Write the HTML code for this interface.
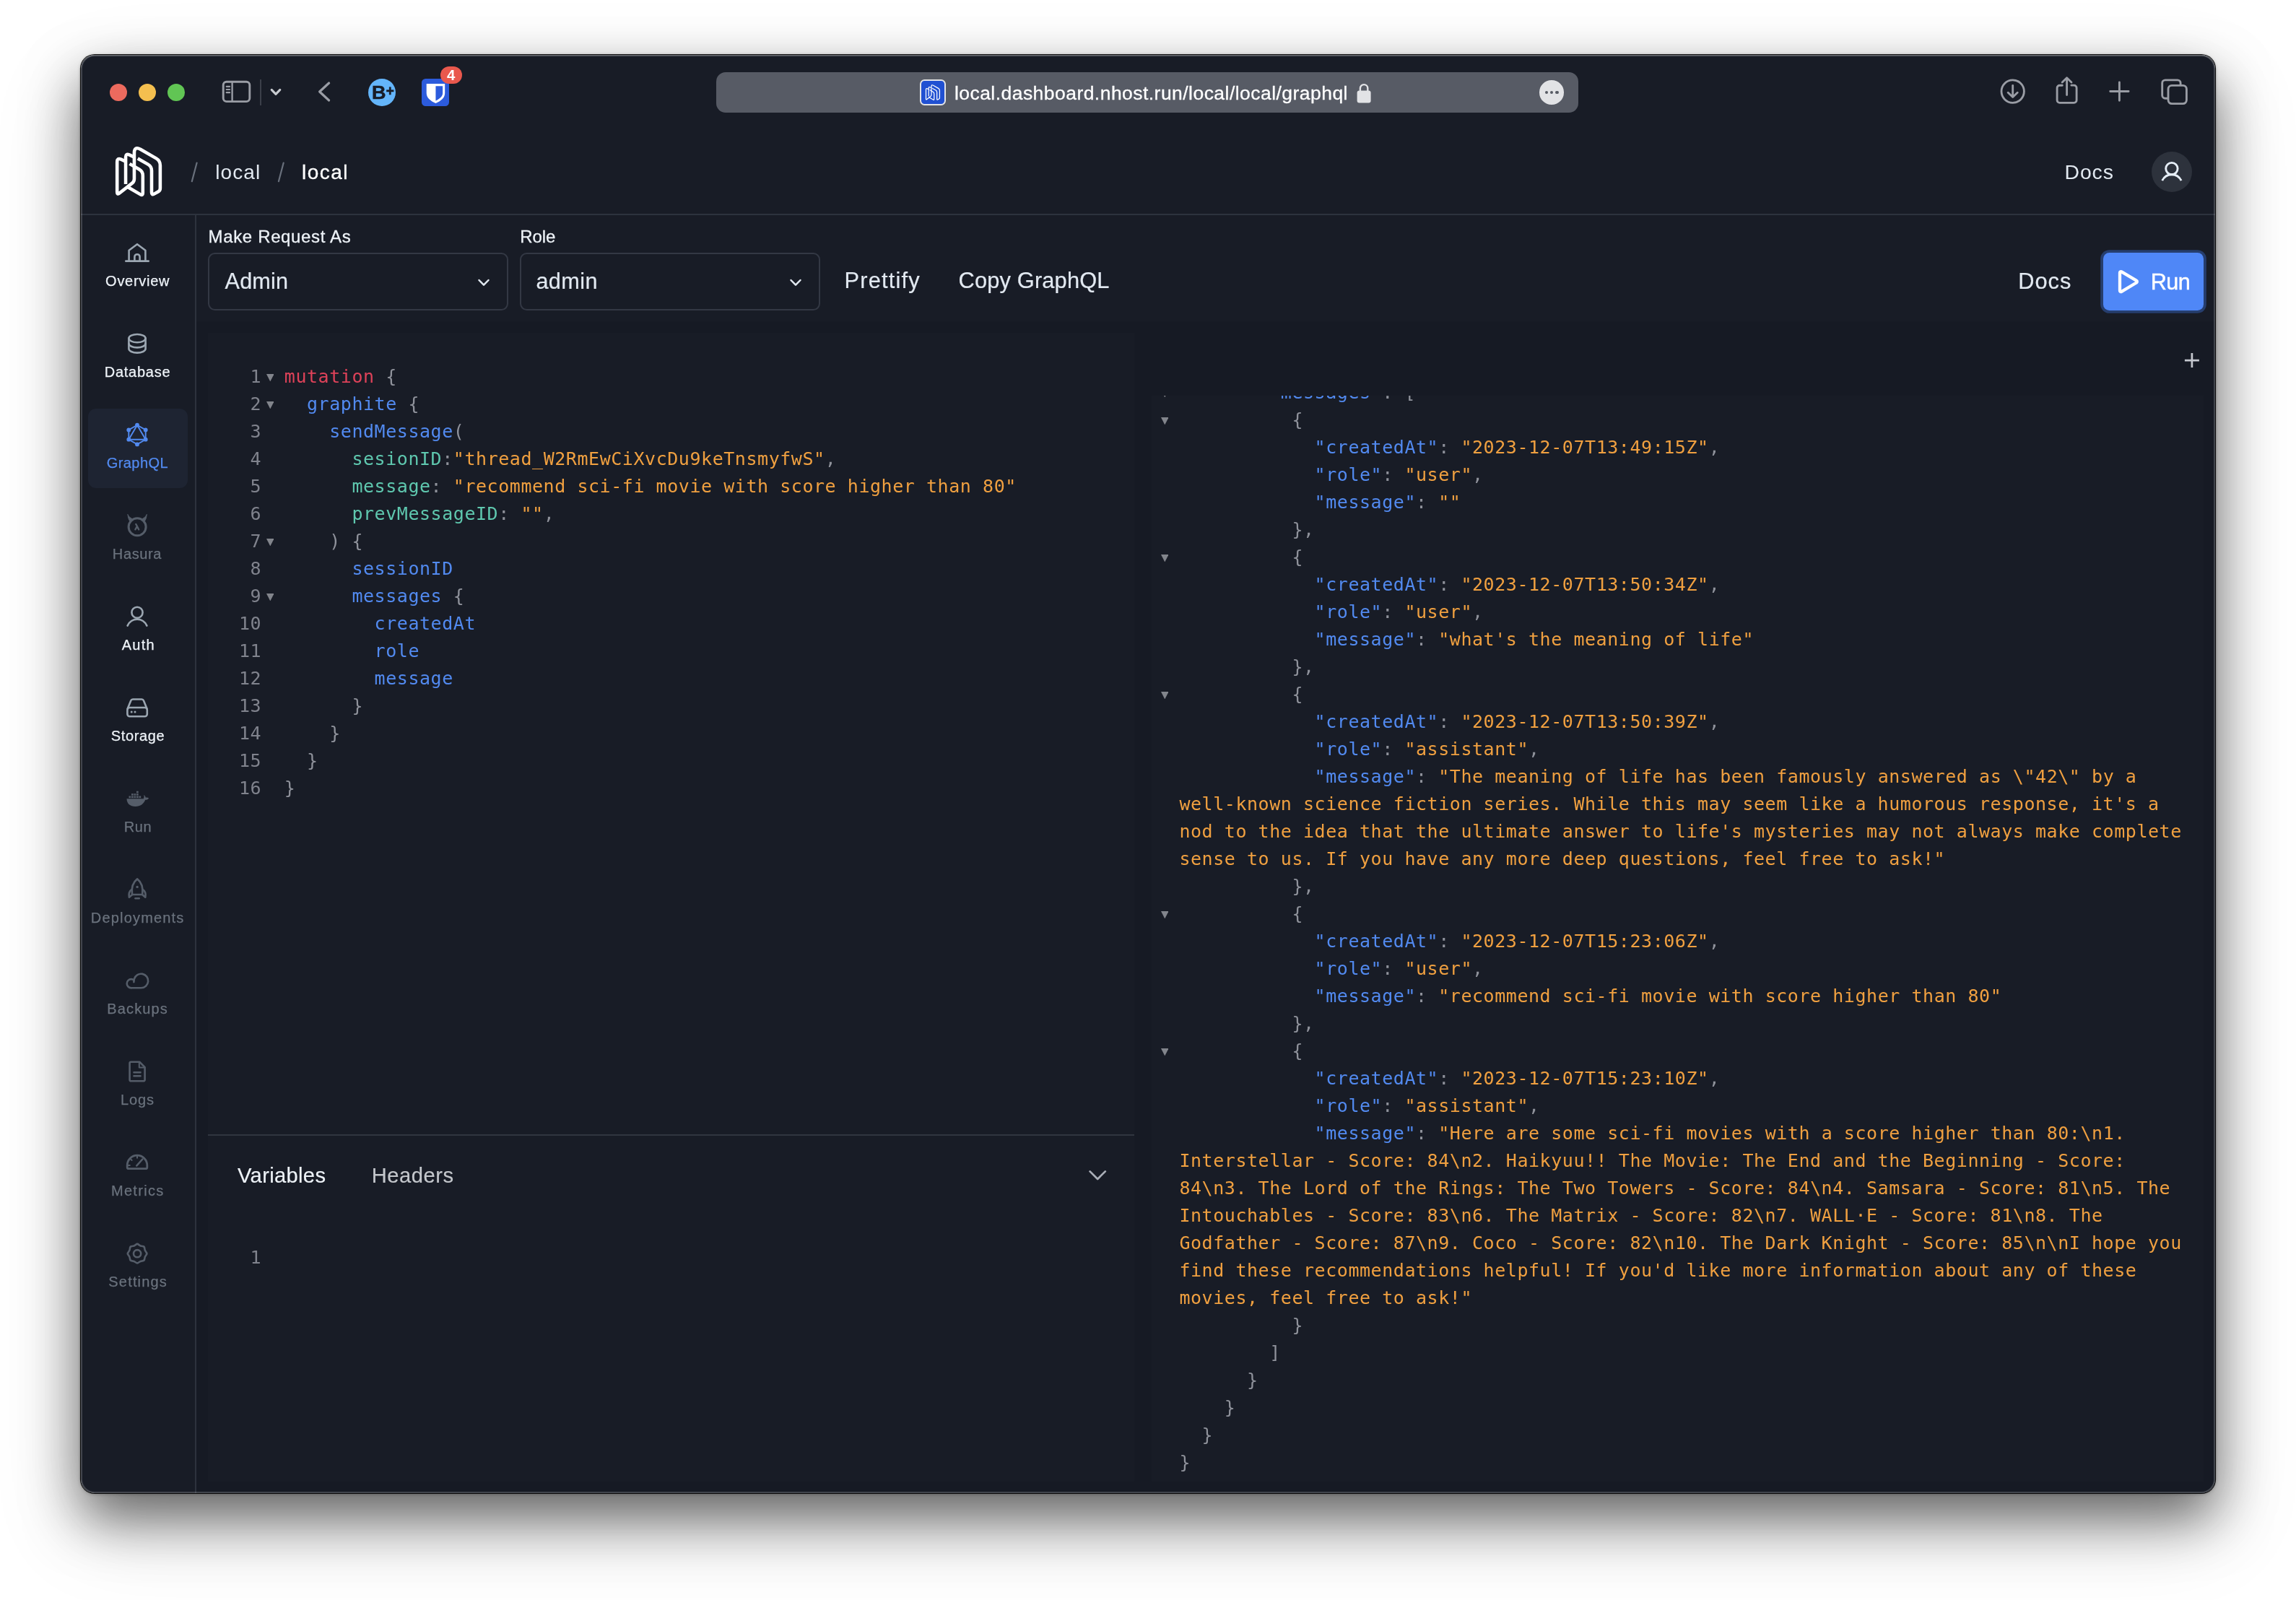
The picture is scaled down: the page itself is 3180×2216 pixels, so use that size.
<!DOCTYPE html>
<html lang="en"><head><meta charset="utf-8"><title>GraphQL - local - nhost dashboard</title>
<style>
html,body{margin:0;padding:0;background:#fff;}
body{width:3180px;height:2216px;position:relative;overflow:hidden;font-family:"Liberation Sans", sans-serif;}
.b{position:absolute;box-sizing:border-box;display:block;}
.t{position:absolute;white-space:pre;line-height:1;font-family:"Liberation Sans", sans-serif;}
#win{position:absolute;left:112px;top:76px;width:2956px;height:1992px;border-radius:19px;background:#181c26;overflow:hidden;}
#shadow{position:absolute;left:112px;top:76px;width:2956px;height:1992px;border-radius:19px;
 box-shadow:0 0 0 1.1px rgba(0,0,0,.92), 0 1px 5px rgba(0,0,0,.3), 0 35px 74px rgba(0,0,0,.55), 0 46px 126px rgba(0,0,0,.15);}
#hl{position:absolute;left:112px;top:76px;width:2956px;height:1992px;border-radius:19px;box-shadow:inset 0 0 0 2px rgba(255,255,255,.19), inset 0 1.5px 0 0 rgba(255,255,255,.16);pointer-events:none;}
#in{position:absolute;left:-112px;top:-76px;width:3180px;height:2216px;will-change:transform;}
.code{position:absolute;font-family:"DejaVu Sans Mono", "Liberation Mono", monospace;font-size:25px;letter-spacing:0.549px;line-height:38px;white-space:pre;color:#8f929b;}
.code div{height:38px;}
.k{color:#de4259}.f{color:#528af0}.a{color:#5fc8af}.s{color:#f0a040}.p{color:#8f929b}
.ln{position:absolute;font-family:"DejaVu Sans Mono", "Liberation Mono", monospace;font-size:25px;letter-spacing:0.549px;line-height:38px;white-space:pre;color:#80838d;text-align:right;}
.ln div{height:38px;}
</style></head><body>
<div id="shadow"></div>
<div id="win"><div id="in">
<div class="b" style="left:151.8px;top:115.5px;width:24.4px;height:24.4px;background:#ec6a5e;border-radius:12.2px;"></div>
<div class="b" style="left:191.60000000000002px;top:115.5px;width:24.4px;height:24.4px;background:#f4bf4f;border-radius:12.2px;"></div>
<div class="b" style="left:231.8px;top:115.5px;width:24.4px;height:24.4px;background:#61c554;border-radius:12.2px;"></div>
<svg class="b" style="left:305px;top:108px;" width="46" height="38" viewBox="305 108 46 38" fill="none"><rect x="309.200" y="113.200" width="36.600" height="27.400" rx="4.600" stroke="#9a9da5" stroke-width="2.900"/><path d="M321.6 113V140.6" stroke="#9a9da5" stroke-width="2.4"/><path d="M313.700 119.800h4.400M313.700 124h4.400M313.700 128.200h4.400" stroke="#9a9da5" stroke-width="2.200" stroke-linecap="round"/></svg>
<div class="b" style="left:360px;top:109.5px;width:1.6px;height:36.5px;background:#3b3f49;"></div>
<svg class="b" style="left:370px;top:118px;" width="24" height="20" viewBox="370 118 24 20" fill="none"><path d="M376.2 124.3l5.8 6 5.8-6" stroke="#c8cbd0" stroke-width="3.1" stroke-linecap="round" stroke-linejoin="round"/></svg>
<svg class="b" style="left:434px;top:108px;" width="30" height="38" viewBox="434 108 30 38" fill="none"><path d="M455.6 115l-13 12 13 12" stroke="#9a9da5" stroke-width="3.2" stroke-linecap="round" stroke-linejoin="round"/></svg>
<div class="b" style="left:509.5px;top:108.7px;width:38px;height:38px;background:#64b5fa;border-radius:19px;"></div>
<div class="t" style="left:515.40px;top:115.54px;font-size:25px;color:#181c26;-webkit-text-stroke:0.5px #181c26;font-weight:700;transform:scaleX(1.08);transform-origin:0 0;">B</div>
<div class="t" style="left:534.60px;top:116.89px;font-size:19.5px;color:#181c26;-webkit-text-stroke:0.5px #181c26;font-weight:700;">+</div>
<div class="b" style="left:584px;top:108.6px;width:38.2px;height:38.2px;background:#2c5bdc;border-radius:5.5px;"></div>
<svg class="b" style="left:584px;top:108.6px;" width="38.2" height="38.2" viewBox="0 0 38.2 38.2" fill="none"><path d="M6.700 7h25.500v13c0 6.400-5.500 10.800-12.750 14.100C12.200 30.800 6.700 26.400 6.700 20z" fill="#fff"/><path d="M19.450 10.200h9.700v9.800c0 4.300-3.800 7.600-9.700 10.500z" fill="#2c5bdc"/></svg>
<div class="b" style="left:609.7px;top:92.1px;width:30.2px;height:24.2px;background:#e9584d;border-radius:12.1px;"></div>
<div class="t" style="left:618.90px;top:94.13px;font-size:20.4px;color:#ffffff;font-weight:700;">4</div>
<div class="b" style="left:992px;top:99.6px;width:1194px;height:56px;background:#575b65;border-radius:13px;"></div>
<div class="b" style="left:1273.6px;top:109.7px;width:36.4px;height:36.4px;background:#2050d2;border-radius:6.5px;border:2px solid #e2e3e6;"></div>
<svg class="b" style="left:1279.5px;top:115.6px;" width="24.6" height="24.6" viewBox="250 150 1200 1240" fill="none"><g stroke="#fff" stroke-width="62" stroke-linecap="round" stroke-linejoin="round"><path d="M818 475L1040 602Q1120 648 1120 740L1120 1225Q1120 1290 1175 1258L1265 1207Q1310 1182 1310 1130L1310 625Q1310 520 1222 470L862 262Q735 190 735 340L735 925Q735 985 690 1018L402 1243Q355 1280 355 1220L355 550Q355 455 440 490L505 520"/><path d="M545 1010L545 440Q545 355 625 390L700 425"/><path d="M640 595L850 716Q925 760 925 850L925 1240Q925 1300 873 1270L612 1116"/></g></svg>
<div class="t" style="left:1321.90px;top:115.57px;font-size:26.5px;color:#ffffff;letter-spacing:0.458px;-webkit-text-stroke:0.3px #ffffff;">local.dashboard.nhost.run/local/local/graphql</div>
<svg class="b" style="left:1878px;top:114px;" width="24" height="30" viewBox="1878 114 24 30" fill="none"><rect x="1879.6" y="125.6" width="19" height="16.9" rx="3" fill="#e2e3e6"/><path d="M1883.9 126.500v-4.2a5.2 5.200 0 0 1 10.4 0v4.2" stroke="#e2e3e6" stroke-width="2.4"/></svg>
<div class="b" style="left:2132.4px;top:111.1px;width:33.6px;height:33.6px;background:#e2e3e6;border-radius:16.8px;"></div>
<div class="b" style="left:2139.4999999999995px;top:125.60000000000001px;width:4.6px;height:4.6px;background:#565a64;border-radius:2.3px;"></div>
<div class="b" style="left:2146.8999999999996px;top:125.60000000000001px;width:4.6px;height:4.6px;background:#565a64;border-radius:2.3px;"></div>
<div class="b" style="left:2154.2999999999997px;top:125.60000000000001px;width:4.6px;height:4.6px;background:#565a64;border-radius:2.3px;"></div>
<svg class="b" style="left:2766px;top:104px;" width="44" height="44" viewBox="2766 104 44 44" fill="none"><circle cx="2787.7" cy="126.6" r="15.7" stroke="#9a9da5" stroke-width="2.85"/><path d="M2787.7 118.300v15.8M2781.2 128.200l6.5 6.3 6.5-6.3" stroke="#9a9da5" stroke-width="2.85" stroke-linecap="round" stroke-linejoin="round"/></svg>
<svg class="b" style="left:2840px;top:102px;" width="46" height="46" viewBox="2840 102 46 46" fill="none"><path d="M2856.3 118.200h-3.6a3.600 3.600 0 0 0-3.600 3.600v17a3.600 3.600 0 0 0 3.600 3.600h19.8a3.600 3.600 0 0 0 3.600-3.600v-17a3.600 3.600 0 0 0-3.600-3.600h-3.600" stroke="#9a9da5" stroke-width="2.85" stroke-linecap="round"/><path d="M2862.6 131.500v-23.400M2856.2 113.900l6.400-6.200 6.400 6.200" stroke="#9a9da5" stroke-width="2.85" stroke-linecap="round" stroke-linejoin="round"/></svg>
<svg class="b" style="left:2918px;top:110px;" width="34" height="34" viewBox="2918 110 34 34" fill="none"><path d="M2922.700 126.500h25.400M2935.400 113.800v25.400" stroke="#9a9da5" stroke-width="2.85" stroke-linecap="round"/></svg>
<svg class="b" style="left:2990px;top:106px;" width="44" height="42" viewBox="2990 106 44 42" fill="none"><path d="M3001.500 136.200h-2.600a4.200 4.200 0 0 1-4.200-4.200v-17a4.200 4.200 0 0 1 4.200-4.200h17a4.200 4.200 0 0 1 4.200 4.200v1.800" stroke="#9a9da5" stroke-width="2.85" stroke-linecap="round"/><rect x="3003" y="118.400" width="25.4" height="25.200" rx="5" stroke="#9a9da5" stroke-width="2.85"/></svg>
<svg class="b" style="left:140px;top:190px;" width="120" height="100" viewBox="0 0 1920 1600" fill="none"><g stroke="#fff" stroke-width="73" stroke-linejoin="round" stroke-linecap="butt"><path d="M812 472L1040 602Q1120 648 1120 740L1120 1225Q1120 1290 1175 1258L1265 1207Q1310 1182 1310 1130L1310 625Q1310 520 1222 470L872 268Q735 196 735 345L735 925Q735 985 690 1018L402 1243Q355 1280 355 1220L355 550Q355 455 440 490L545 538"/><path d="M545 1040L545 440Q545 355 625 390L735 441"/><path d="M632 590L850 716Q925 760 925 850L925 1240Q925 1300 873 1270L590 1104"/></g></svg>
<svg class="b" style="left:260px;top:220px;" width="20" height="36" viewBox="260 220 20 36" fill="none"><path d="M272.6 225.500L265.800 251.200" stroke="#69707c" stroke-width="2.2" stroke-linecap="round"/></svg>
<div class="t" style="left:298.20px;top:224.50px;font-size:28px;color:#e2e9f1;letter-spacing:1.084px;">local</div>
<svg class="b" style="left:380px;top:220px;" width="20" height="36" viewBox="380 220 20 36" fill="none"><path d="M392.7 225.500L385.900 251.200" stroke="#69707c" stroke-width="2.2" stroke-linecap="round"/></svg>
<div class="t" style="left:418.00px;top:224.50px;font-size:28px;color:#ffffff;letter-spacing:1.459px;-webkit-text-stroke:0.35px #ffffff;">local</div>
<div class="t" style="left:2859.50px;top:223.86px;font-size:28.4px;color:#e2e9f1;letter-spacing:0.904px;">Docs</div>
<div class="b" style="left:2979.6px;top:209.8px;width:56.2px;height:56.2px;background:#2d323c;border-radius:28.1px;"></div>
<svg class="b" style="left:2990px;top:220px;" width="36" height="36" viewBox="2990 220 36 36" fill="none"><circle cx="3007.900" cy="233.600" r="8.200" stroke="#e6eef7" stroke-width="2.900"/><path d="M2994.700 250.200c2.700-5.400 7.500-8.400 13.200-8.400s10.500 3 13.200 8.400" stroke="#e6eef7" stroke-width="2.900"/></svg>
<div class="b" style="left:111px;top:296px;width:2958px;height:2px;background:#2d323d;"></div>
<div class="b" style="left:270px;top:297px;width:2px;height:1780px;background:#2d323d;"></div>
<div class="b" style="left:122px;top:566px;width:138px;height:110px;background:#1e2432;border-radius:11px;"></div>
<div class="t" style="left:146.10px;top:378.82px;font-size:20px;color:#eef3f8;letter-spacing:0.728px;-webkit-text-stroke:0.25px #eef3f8;">Overview</div>
<div class="t" style="left:144.72px;top:504.82px;font-size:20px;color:#eef3f8;letter-spacing:0.751px;-webkit-text-stroke:0.25px #eef3f8;">Database</div>
<div class="t" style="left:147.72px;top:630.82px;font-size:20px;color:#528af0;letter-spacing:0.435px;-webkit-text-stroke:0.25px #528af0;">GraphQL</div>
<div class="t" style="left:155.85px;top:756.82px;font-size:20px;color:#6a727d;letter-spacing:0.630px;-webkit-text-stroke:0.25px #6a727d;">Hasura</div>
<div class="t" style="left:168.72px;top:882.82px;font-size:20px;color:#eef3f8;letter-spacing:1.243px;-webkit-text-stroke:0.25px #eef3f8;">Auth</div>
<div class="t" style="left:153.72px;top:1008.82px;font-size:20px;color:#eef3f8;letter-spacing:0.637px;-webkit-text-stroke:0.25px #eef3f8;">Storage</div>
<div class="t" style="left:171.72px;top:1134.82px;font-size:20px;color:#6a727d;letter-spacing:0.592px;-webkit-text-stroke:0.25px #6a727d;">Run</div>
<div class="t" style="left:125.85px;top:1260.82px;font-size:20px;color:#6a727d;letter-spacing:1.178px;-webkit-text-stroke:0.25px #6a727d;">Deployments</div>
<div class="t" style="left:148.35px;top:1386.82px;font-size:20px;color:#6a727d;letter-spacing:1.132px;-webkit-text-stroke:0.25px #6a727d;">Backups</div>
<div class="t" style="left:167.10px;top:1512.82px;font-size:20px;color:#6a727d;letter-spacing:0.877px;-webkit-text-stroke:0.25px #6a727d;">Logs</div>
<div class="t" style="left:153.97px;top:1638.82px;font-size:20px;color:#6a727d;letter-spacing:1.301px;-webkit-text-stroke:0.25px #6a727d;">Metrics</div>
<div class="t" style="left:150.35px;top:1764.82px;font-size:20px;color:#6a727d;letter-spacing:1.176px;-webkit-text-stroke:0.25px #6a727d;">Settings</div>
<svg class="b" style="left:169.9px;top:329.75px;color:#9ba6b1" width="40" height="40" viewBox="0 0 40 40" fill="none" stroke="currentColor" stroke-width="2.6" stroke-linecap="round" stroke-linejoin="round"><path d="M8.600 31.200V16.800L20 8.200l11.400 8.600v14.400"/><path d="M4.400 31.700h31.200" stroke-width="2.8"/><path d="M16.400 31.200v-5.400a3.600 3.600 0 0 1 7.200 0v5.400"/></svg>
<svg class="b" style="left:169.9px;top:455.75px;color:#9ba6b1" width="40" height="40" viewBox="0 0 40 40" fill="none" stroke="currentColor" stroke-width="2.6" stroke-linecap="round" stroke-linejoin="round"><ellipse cx="20" cy="12.600" rx="11.600" ry="5.600"/><path d="M8.400 12.600v14.400c0 3.100 5.200 5.600 11.600 5.600s11.600-2.500 11.600-5.600V12.600"/><path d="M8.400 19.800c0 3.100 5.200 5.600 11.600 5.600s11.600-2.500 11.600-5.600"/></svg>
<svg class="b" style="left:169.9px;top:581.75px;color:#528af0" width="40" height="40" viewBox="0 0 40 40" fill="none" stroke="currentColor" stroke-width="2.6" stroke-linecap="round" stroke-linejoin="round"><g stroke-width="1.9"><path d="M20 6.700L31.700 13.400V26.700L20 33.400 8.300 26.700V13.400z"/><path d="M20 6.700L31.700 26.700H8.300z"/></g><g fill="currentColor" stroke="none"><circle cx="20" cy="6.7" r="2.9"/><circle cx="31.7" cy="13.4" r="2.9"/><circle cx="31.7" cy="26.7" r="2.9"/><circle cx="20" cy="33.4" r="2.9"/><circle cx="8.3" cy="26.7" r="2.9"/><circle cx="8.3" cy="13.4" r="2.9"/></g></svg>
<svg class="b" style="left:169.9px;top:707.75px;color:#555d69" width="40" height="40" viewBox="0 0 40 40" fill="none" stroke="currentColor" stroke-width="2.6" stroke-linecap="round" stroke-linejoin="round"><circle cx="20.100" cy="21.800" r="12" stroke-width="3"/><path d="M7 4.800C7.400 9.600 8.800 13 10.900 15l3.900-3.900C11.300 10.300 8.600 8 7 4.800zM33.200 4.800C32.800 9.600 31.400 13 29.300 15l-3.900-3.900C28.900 10.300 31.600 8 33.200 4.800z" fill="currentColor" stroke-width="1" /><path d="M18.200 17.900l1.700 2.900 2.300 4.600M19.900 20.800l-2.500 4.600" stroke-width="2.300"/></svg>
<svg class="b" style="left:169.9px;top:833.75px;color:#9ba6b1" width="40" height="40" viewBox="0 0 40 40" fill="none" stroke="currentColor" stroke-width="2.6" stroke-linecap="round" stroke-linejoin="round"><circle cx="20" cy="14.300" r="7.600"/><path d="M6.600 32.600C9.400 26.700 14.400 23.800 20 23.800s10.600 2.900 13.400 8.800"/></svg>
<svg class="b" style="left:169.9px;top:959.75px;color:#9ba6b1" width="40" height="40" viewBox="0 0 40 40" fill="none" stroke="currentColor" stroke-width="2.6" stroke-linecap="round" stroke-linejoin="round"><rect x="6.400" y="20" width="27.400" height="12.200" rx="3.200"/><path d="M6.700 21.600L11.200 10.400c.5-1.200 1.500-1.900 2.800-1.900h12.200c1.300 0 2.300.7 2.800 1.900l4.500 11.200"/><circle cx="12.200" cy="26.100" r="1.500" fill="currentColor" stroke="none"/><circle cx="17" cy="26.100" r="1.500" fill="currentColor" stroke="none"/></svg>
<svg class="b" style="left:169.9px;top:1085.75px;color:#555d69" width="40" height="40" viewBox="0 0 40 40" fill="none" stroke="currentColor" stroke-width="2.6" stroke-linecap="round" stroke-linejoin="round"><g fill="currentColor" stroke="none" transform="translate(0.300 1.900) "><path d="M5.200 18.400h23.300c.6-1.700 1.200-3.300.3-5.200 1.700 1 2.500 2.300 2.700 3.700 1.500-.4 3-.3 4.300.6-1 1.700-2.700 2.400-4.900 2.300C28.800 25.400 24.300 29 17.200 29 9.800 29 5.400 25.300 5.200 18.400z"/><rect x="8.2" y="14.6" width="2.700" height="2.600"/><rect x="11.7" y="14.6" width="2.700" height="2.600"/><rect x="15.2" y="14.6" width="2.700" height="2.600"/><rect x="18.7" y="14.6" width="2.700" height="2.600"/><rect x="22.2" y="14.6" width="2.700" height="2.600"/><rect x="11.7" y="11.2" width="2.700" height="2.600"/><rect x="15.2" y="11.2" width="2.700" height="2.600"/><rect x="18.7" y="11.2" width="2.700" height="2.600"/><rect x="18.7" y="7.8" width="2.700" height="2.600"/></g></svg>
<svg class="b" style="left:169.9px;top:1211.75px;color:#555d69" width="40" height="40" viewBox="0 0 40 40" fill="none" stroke="currentColor" stroke-width="2.6" stroke-linecap="round" stroke-linejoin="round"><path d="M20.100 5.400C14.300 9.800 11.800 17.300 13 27h14.200C28.400 17.300 25.900 9.800 20.100 5.400z"/><path d="M12.700 19.800c-3.300 2-4.700 5.900-3.800 10.900l4.600-3.900M27.500 19.800c3.300 2 4.700 5.900 3.800 10.900l-4.600-3.900"/><path d="M17.400 32.200h5.400" stroke-width="2.400"/><circle cx="20.100" cy="16.400" r="1.700" fill="currentColor" stroke="none"/></svg>
<svg class="b" style="left:169.9px;top:1337.75px;color:#555d69" width="40" height="40" viewBox="0 0 40 40" fill="none" stroke="currentColor" stroke-width="2.6" stroke-linecap="round" stroke-linejoin="round"><path d="M11.800 30.300h13.600a9.800 9.800 0 1 0-9.400-12.600c-.5 1.500-.7 3-.6 4.500"/><path d="M11.800 30.300a6.100 6.100 0 0 1 0-12.200c1.500 0 2.800.5 3.900 1.300"/></svg>
<svg class="b" style="left:169.9px;top:1463.75px;color:#555d69" width="40" height="40" viewBox="0 0 40 40" fill="none" stroke="currentColor" stroke-width="2.6" stroke-linecap="round" stroke-linejoin="round"><path d="M11.400 6.700h11.800l7.400 7.400v17.400a1.800 1.800 0 0 1-1.800 1.800H11.400a1.800 1.800 0 0 1-1.800-1.800V8.500a1.800 1.800 0 0 1 1.800-1.800z"/><path d="M22.800 7v7.400h7.400" stroke-width="2"/><path d="M15.400 21.200h9.200M15.400 26.200h9.200" stroke-width="2.400"/></svg>
<svg class="b" style="left:169.9px;top:1589.75px;color:#555d69" width="40" height="40" viewBox="0 0 40 40" fill="none" stroke="currentColor" stroke-width="2.6" stroke-linecap="round" stroke-linejoin="round"><path d="M8.200 28.700h23.600a2 2 0 0 0 2-2V24a13.800 13.800 0 0 0-27.600 0v2.700a2 2 0 0 0 2 2z" stroke-width="2.800"/><path d="M19.200 24.600l8.200-9.200" stroke-width="2.400"/><path d="M20 13.800v-2.400M9.800 24h-2.400" stroke-width="2"/><path d="M12.600 17l-1.600-1.600" stroke-width="2"/></svg>
<svg class="b" style="left:169.9px;top:1715.75px;color:#555d69" width="40" height="40" viewBox="0 0 40 40" fill="none" stroke="currentColor" stroke-width="2.6" stroke-linecap="round" stroke-linejoin="round"><path d="M18.00 7.97Q20.10 5.90 22.20 7.97Q24.31 10.04 27.26 10.06Q30.21 10.09 30.24 13.04Q30.26 15.99 32.33 18.10Q34.40 20.20 32.33 22.30Q30.26 24.41 30.24 27.36Q30.21 30.31 27.26 30.34Q24.31 30.36 22.20 32.43Q20.10 34.50 18.00 32.43Q15.89 30.36 12.94 30.34Q9.99 30.31 9.96 27.36Q9.94 24.41 7.87 22.30Q5.80 20.20 7.87 18.10Q9.94 15.99 9.96 13.04Q9.99 10.09 12.94 10.06Q15.89 10.04 18.00 7.97z"/><circle cx="20.100" cy="20.200" r="5.100"/></svg>
<div class="t" style="left:288.60px;top:315.58px;font-size:24px;color:#eef3f8;letter-spacing:0.641px;-webkit-text-stroke:0.3px #eef3f8;">Make Request As</div>
<div class="t" style="left:720.20px;top:315.58px;font-size:24px;color:#eef3f8;letter-spacing:-0.071px;-webkit-text-stroke:0.3px #eef3f8;">Role</div>
<div class="b" style="left:288.2px;top:350.2px;width:415.8px;height:79.4px;border-radius:9.5px;border:2px solid #333844;"></div>
<div class="b" style="left:720.4px;top:350.2px;width:415.4px;height:79.4px;border-radius:9.5px;border:2px solid #333844;"></div>
<div class="t" style="left:311.60px;top:374.00px;font-size:30.6px;color:#e2e9f1;letter-spacing:0.174px;-webkit-text-stroke:0.2px #e2e9f1;">Admin</div>
<div class="t" style="left:742.40px;top:374.00px;font-size:30.6px;color:#e2e9f1;letter-spacing:0.422px;-webkit-text-stroke:0.2px #e2e9f1;">admin</div>
<svg class="b" style="left:655px;top:378px;" width="30" height="24" viewBox="655 378 30 24" fill="none"><path d="M663.5 388l6.500 6.700 6.500-6.700" stroke="#e2e9f1" stroke-width="2.500" stroke-linecap="round" stroke-linejoin="round"/></svg>
<svg class="b" style="left:1087px;top:378px;" width="30" height="24" viewBox="1087 378 30 24" fill="none"><path d="M1095.5 388l6.500 6.700 6.500-6.700" stroke="#e2e9f1" stroke-width="2.500" stroke-linecap="round" stroke-linejoin="round"/></svg>
<div class="t" style="left:1169.50px;top:374.03px;font-size:30.8px;color:#e2e9f1;letter-spacing:1.195px;-webkit-text-stroke:0.2px #e2e9f1;">Prettify</div>
<div class="t" style="left:1327.50px;top:374.03px;font-size:30.8px;color:#e2e9f1;letter-spacing:0.164px;-webkit-text-stroke:0.2px #e2e9f1;">Copy GraphQL</div>
<div class="t" style="left:2795.30px;top:375.33px;font-size:30.8px;color:#e2e9f1;letter-spacing:0.944px;-webkit-text-stroke:0.2px #e2e9f1;">Docs</div>
<div class="b" style="left:2913px;top:350px;width:139.4px;height:80px;background:#4f87f7;border-radius:8.5px;box-shadow:0 0 0 3.800px #263e6e;"></div>
<svg class="b" style="left:2926px;top:366px;" width="44" height="48" viewBox="2926 366 44 48" fill="none"><path d="M2936 377.800v24.600a1.600 1.600 0 0 0 2.400 1.400l20.600-12.300a1.600 1.600 0 0 0 0-2.800l-20.600-12.300a1.600 1.600 0 0 0-2.400 1.400z" stroke="#fff" stroke-width="4.300" stroke-linejoin="round"/></svg>
<div class="t" style="left:2978.80px;top:374.50px;font-size:30.6px;color:#ffffff;letter-spacing:-0.554px;-webkit-text-stroke:0.45px #ffffff;">Run</div>
<div class="b" style="left:271.8px;top:445px;width:2797px;height:1624px;background:#161a24;"></div>
<div class="b" style="left:288px;top:461px;width:1283px;height:1591px;background:#181c26;"></div>
<div class="b" style="left:1595px;top:548px;width:1457px;height:1504px;background:#181c26;"></div>
<div class="b" style="left:288px;top:1571.4px;width:1283px;height:2px;background:#30353f;"></div>
<div class="t" style="left:329.00px;top:1613.68px;font-size:29.2px;color:#eef3f8;letter-spacing:0.310px;-webkit-text-stroke:0.15px #eef3f8;">Variables</div>
<div class="t" style="left:514.80px;top:1613.68px;font-size:29.2px;color:#c4c7cc;letter-spacing:0.479px;-webkit-text-stroke:0.15px #c4c7cc;">Headers</div>
<svg class="b" style="left:1500px;top:1612px;" width="40" height="30" viewBox="1500 1612 40 30" fill="none"><path d="M1509.600 1622.400l10.600 10.600 10.600-10.600" stroke="#a9aeb7" stroke-width="2.700" stroke-linecap="round" stroke-linejoin="round"/></svg>
<svg class="b" style="left:3020px;top:484px;" width="32" height="32" viewBox="3020 484 32 32" fill="none"><path d="M3025.900 499.100h20M3035.900 489.100v20" stroke="#c5c8cf" stroke-width="2.700"/></svg>
<div class="code" style="left:393.800px;top:503.0px"><div><span class="k">mutation</span> {</div><div>  <span class="f">graphite</span> {</div><div>    <span class="f">sendMessage</span>(</div><div>      <span class="a">sesionID</span>:<span class="s">"thread_W2RmEwCiXvcDu9keTnsmyfwS"</span>,</div><div>      <span class="a">message</span>: <span class="s">"recommend sci-fi movie with score higher than 80"</span></div><div>      <span class="a">prevMessageID</span>: <span class="s">""</span>,</div><div>    ) {</div><div>      <span class="f">sessionID</span></div><div>      <span class="f">messages</span> {</div><div>        <span class="f">createdAt</span></div><div>        <span class="f">role</span></div><div>        <span class="f">message</span></div><div>      }</div><div>    }</div><div>  }</div><div>}</div></div>
<div class="ln" style="left:300px;width:62.200px;top:503.0px"><div>1</div><div>2</div><div>3</div><div>4</div><div>5</div><div>6</div><div>7</div><div>8</div><div>9</div><div>10</div><div>11</div><div>12</div><div>13</div><div>14</div><div>15</div><div>16</div></div>
<div class="ln" style="left:300px;width:62.200px;top:1723.0px"><div>1</div></div>
<svg class="b" style="left:368.6px;top:517.8px;" width="10.6" height="10.4" viewBox="0 0 10.600 10.400" fill="none"><path d="M0 0h10.600L5.300 10.400z" fill="#82858c"/></svg>
<svg class="b" style="left:368.6px;top:555.8px;" width="10.6" height="10.4" viewBox="0 0 10.600 10.400" fill="none"><path d="M0 0h10.600L5.300 10.400z" fill="#82858c"/></svg>
<svg class="b" style="left:368.6px;top:745.8px;" width="10.6" height="10.4" viewBox="0 0 10.600 10.400" fill="none"><path d="M0 0h10.600L5.300 10.400z" fill="#82858c"/></svg>
<svg class="b" style="left:368.6px;top:821.8px;" width="10.6" height="10.4" viewBox="0 0 10.600 10.400" fill="none"><path d="M0 0h10.600L5.300 10.400z" fill="#82858c"/></svg>
<div class="b" style="left:1595px;top:548px;width:1457px;height:1504px;overflow:hidden"><div class="code" style="left:38.40000000000009px;top:-23.299999999999955px"><div>        <span class="f">"messages"</span>: [</div><div>          {</div><div>            <span class="f">"createdAt"</span>: <span class="s">"2023-12-07T13:49:15Z"</span>,</div><div>            <span class="f">"role"</span>: <span class="s">"user"</span>,</div><div>            <span class="f">"message"</span>: <span class="s">""</span></div><div>          },</div><div>          {</div><div>            <span class="f">"createdAt"</span>: <span class="s">"2023-12-07T13:50:34Z"</span>,</div><div>            <span class="f">"role"</span>: <span class="s">"user"</span>,</div><div>            <span class="f">"message"</span>: <span class="s">"what's the meaning of life"</span></div><div>          },</div><div>          {</div><div>            <span class="f">"createdAt"</span>: <span class="s">"2023-12-07T13:50:39Z"</span>,</div><div>            <span class="f">"role"</span>: <span class="s">"assistant"</span>,</div><div>            <span class="f">"message"</span>: <span class="s">"The meaning of life has been famously answered as \"42\" by a</span></div><div><span class="s">well-known science fiction series. While this may seem like a humorous response, it's a</span></div><div><span class="s">nod to the idea that the ultimate answer to life's mysteries may not always make complete</span></div><div><span class="s">sense to us. If you have any more deep questions, feel free to ask!"</span></div><div>          },</div><div>          {</div><div>            <span class="f">"createdAt"</span>: <span class="s">"2023-12-07T15:23:06Z"</span>,</div><div>            <span class="f">"role"</span>: <span class="s">"user"</span>,</div><div>            <span class="f">"message"</span>: <span class="s">"recommend sci-fi movie with score higher than 80"</span></div><div>          },</div><div>          {</div><div>            <span class="f">"createdAt"</span>: <span class="s">"2023-12-07T15:23:10Z"</span>,</div><div>            <span class="f">"role"</span>: <span class="s">"assistant"</span>,</div><div>            <span class="f">"message"</span>: <span class="s">"Here are some sci-fi movies with a score higher than 80:\n1.</span></div><div><span class="s">Interstellar - Score: 84\n2. Haikyuu!! The Movie: The End and the Beginning - Score:</span></div><div><span class="s">84\n3. The Lord of the Rings: The Two Towers - Score: 84\n4. Samsara - Score: 81\n5. The</span></div><div><span class="s">Intouchables - Score: 83\n6. The Matrix - Score: 82\n7. WALL·E - Score: 81\n8. The</span></div><div><span class="s">Godfather - Score: 87\n9. Coco - Score: 82\n10. The Dark Knight - Score: 85\n\nI hope you</span></div><div><span class="s">find these recommendations helpful! If you'd like more information about any of these</span></div><div><span class="s">movies, feel free to ask!"</span></div><div>          }</div><div>        ]</div><div>      }</div><div>    }</div><div>  }</div><div>}</div></div><svg class="b" style="left:12.700000000000045px;top:-8.50px" width="10.600" height="10.400" viewBox="0 0 10.600 10.400"><path d="M0 0h10.600L5.300 10.400z" fill="#82858c"/></svg><svg class="b" style="left:12.700000000000045px;top:29.50px" width="10.600" height="10.400" viewBox="0 0 10.600 10.400"><path d="M0 0h10.600L5.300 10.400z" fill="#82858c"/></svg><svg class="b" style="left:12.700000000000045px;top:219.50px" width="10.600" height="10.400" viewBox="0 0 10.600 10.400"><path d="M0 0h10.600L5.300 10.400z" fill="#82858c"/></svg><svg class="b" style="left:12.700000000000045px;top:409.50px" width="10.600" height="10.400" viewBox="0 0 10.600 10.400"><path d="M0 0h10.600L5.300 10.400z" fill="#82858c"/></svg><svg class="b" style="left:12.700000000000045px;top:713.50px" width="10.600" height="10.400" viewBox="0 0 10.600 10.400"><path d="M0 0h10.600L5.300 10.400z" fill="#82858c"/></svg><svg class="b" style="left:12.700000000000045px;top:903.50px" width="10.600" height="10.400" viewBox="0 0 10.600 10.400"><path d="M0 0h10.600L5.300 10.400z" fill="#82858c"/></svg></div>
</div></div>
<div id="hl"></div>
</body></html>
